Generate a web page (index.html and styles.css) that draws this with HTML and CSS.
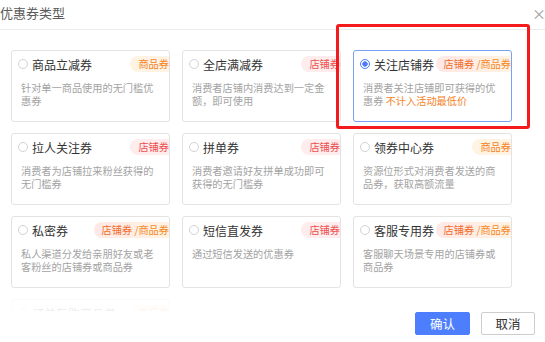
FILE: index.html
```html
<!DOCTYPE html>
<html lang="zh-CN">
<head>
    <meta charset="UTF-8">
    <meta name="viewport" content="width=device-width, initial-scale=1.0">
    <title>优惠券类型</title>
    <link rel="stylesheet" href="styles.css">
</head>
<body>
    <div class="dialog">
        <div class="dialog-header">
            <span class="dialog-title">优惠券类型</span>
            <span class="dialog-close">×</span>
        </div>
        <div class="body-wrap">
            <div class="dialog-body">
                <div class="coupon-grid">
                    <div class="coupon-card">
                        <div class="coupon-head">
                            <span class="radio"></span>
                            <span class="coupon-name">商品立减券</span>
                            <span class="tag tag-goods">商品券</span>
                        </div>
                        <div class="coupon-desc">针对单一商品使用的无门槛优惠券</div>
                    </div>
                    <div class="coupon-card">
                        <div class="coupon-head">
                            <span class="radio"></span>
                            <span class="coupon-name">全店满减券</span>
                            <span class="tag tag-shop">店铺券</span>
                        </div>
                        <div class="coupon-desc">消费者店铺内消费达到一定金额，即可使用</div>
                    </div>
                    <div class="coupon-card selected">
                        <div class="coupon-head">
                            <span class="radio"></span>
                            <span class="coupon-name">关注店铺券</span>
                            <span class="tag tag-both"><span class="part-shop">店铺券</span> /商品券</span>
                        </div>
                        <div class="coupon-desc">消费者关注店铺即可获得的优惠券 <span class="note">不计入活动最低价</span></div>
                    </div>

                    <div class="coupon-card">
                        <div class="coupon-head">
                            <span class="radio"></span>
                            <span class="coupon-name">拉人关注券</span>
                            <span class="tag tag-shop">店铺券</span>
                        </div>
                        <div class="coupon-desc">消费者为店铺拉来粉丝获得的无门槛券</div>
                    </div>
                    <div class="coupon-card">
                        <div class="coupon-head">
                            <span class="radio"></span>
                            <span class="coupon-name">拼单券</span>
                            <span class="tag tag-shop">店铺券</span>
                        </div>
                        <div class="coupon-desc">消费者邀请好友拼单成功即可获得的无门槛券</div>
                    </div>
                    <div class="coupon-card">
                        <div class="coupon-head">
                            <span class="radio"></span>
                            <span class="coupon-name">领券中心券</span>
                            <span class="tag tag-goods">商品券</span>
                        </div>
                        <div class="coupon-desc">资源位形式对消费者发送的商品券，获取高额流量</div>
                    </div>

                    <div class="coupon-card">
                        <div class="coupon-head">
                            <span class="radio"></span>
                            <span class="coupon-name">私密券</span>
                            <span class="tag tag-both"><span class="part-shop">店铺券</span> /商品券</span>
                        </div>
                        <div class="coupon-desc">私人渠道分发给亲朋好友或老客粉丝的店铺券或商品券</div>
                    </div>
                    <div class="coupon-card">
                        <div class="coupon-head">
                            <span class="radio"></span>
                            <span class="coupon-name">短信直发券</span>
                            <span class="tag tag-shop">店铺券</span>
                        </div>
                        <div class="coupon-desc">通过短信发送的优惠券</div>
                    </div>
                    <div class="coupon-card">
                        <div class="coupon-head">
                            <span class="radio"></span>
                            <span class="coupon-name">客服专用券</span>
                            <span class="tag tag-both"><span class="part-shop">店铺券</span> /商品券</span>
                        </div>
                        <div class="coupon-desc">客服聊天场景专用的店铺券或商品券</div>
                    </div>

                    <div class="coupon-card">
                        <div class="coupon-head">
                            <span class="radio"></span>
                            <span class="coupon-name">订单复购商品券</span>
                            <span class="tag tag-goods">商品券</span>
                        </div>
                        <div class="coupon-desc">下单后复购可使用的商品券</div>
                    </div>
                </div>
            </div>
        </div>
        <div class="dialog-footer">
            <button class="btn btn-primary">确认</button>
            <button class="btn">取消</button>
        </div>
        <div class="mark-box"></div>
    </div>
</body>
</html>
```

FILE: styles.css
```css
body {
    margin: 0;
    font-family: "Noto Sans CJK SC", "Noto Sans", sans-serif;
    background-color: #fff;
    color: #333;
}
.dialog {
    position: relative;
    width: 545px;
    height: 342px;
    overflow: hidden;
}
.dialog-header {
    display: flex;
    justify-content: space-between;
    height: 29px;
    border-bottom: 1px solid #ececec;
}
.dialog-title {
    font-size: 13px;
    line-height: 26px;
    color: #5a5a5a;
}
.dialog-close {
    font-size: 14px;
    line-height: 26px;
    color: #a0a0a0;
    margin-right: -1px;
}
.body-wrap {
    position: relative;
}
.body-wrap::after {
    content: "";
    position: absolute;
    left: 0;
    right: 7px;
    bottom: 0;
    height: 24px;
    background: linear-gradient(rgba(255, 255, 255, 0), rgba(255, 255, 255, 0.8) 50%, rgba(255, 255, 255, 0.92));
}
.dialog-body {
    height: 281px;
    overflow-y: scroll;
    box-sizing: border-box;
    padding: 20px 0 0 11px;
}
.dialog-body::-webkit-scrollbar {
    width: 7px;
}
.dialog-body::-webkit-scrollbar-track {
    background: #f4f4f4;
}
.dialog-body::-webkit-scrollbar-thumb {
    background: #e2e2e2;
}
.coupon-grid {
    display: grid;
    grid-template-columns: repeat(3, 159px);
    grid-auto-rows: 72px;
    column-gap: 12px;
    row-gap: 11px;
    padding-bottom: 40px;
}
.coupon-card {
    box-sizing: border-box;
    border: 1px solid #e3e3e3;
    border-radius: 3px;
    padding: 5px 0 0 6px;
    overflow: hidden;
    background: #fff;
}
.coupon-card.selected {
    border-color: #7ba0f5;
}
.coupon-head {
    display: flex;
    align-items: center;
    height: 16px;
}
.radio {
    flex: none;
    width: 10px;
    height: 10px;
    box-sizing: border-box;
    border: 1px solid #d2d2d2;
    border-radius: 50%;
}
.selected .radio {
    border-color: #4d7cfe;
    background: radial-gradient(circle, #4d7cfe 2.4px, #fff 3px);
}
.coupon-name {
    margin-left: 4px;
    font-size: 12px;
    color: #333;
    white-space: nowrap;
}
.tag {
    margin-left: auto;
    flex: none;
    height: 16px;
    line-height: 16px;
    padding-left: 8px;
    font-size: 10.2px;
    border-radius: 8px 0 0 8px;
    white-space: nowrap;
}
.tag-goods {
    background: #fff3e3;
    color: #f5821f;
}
.tag-shop {
    background: #ffecec;
    color: #ee4e4e;
}
.tag-both {
    background: linear-gradient(90deg, #ffe8e6, #fff3e2);
    color: #f5871f;
}
.tag-both .part-shop {
    color: #f26a2a;
}
.coupon-desc {
    margin-top: 9px;
    padding: 0 8px 0 3px;
    font-size: 10.2px;
    line-height: 13.3px;
    color: #a3a3a3;
}
.coupon-desc .note {
    color: #f5821f;
}
.dialog-footer {
    display: flex;
    justify-content: flex-end;
    gap: 11px;
    padding: 1px 10px 0 0;
}
.btn {
    width: 54px;
    height: 23px;
    padding: 0;
    border: 1px solid #cdcdcd;
    border-radius: 2px;
    background: #fff;
    color: #333;
    font-family: "Noto Sans CJK SC", sans-serif;
    font-size: 12.5px;
}
.btn-primary {
    width: 55px;
    border-color: #4d7efe;
    background: #4d7efe;
    color: #fff;
}
.mark-box {
    position: absolute;
    left: 336px;
    top: 24px;
    width: 194px;
    height: 105px;
    box-sizing: border-box;
    border: 3px solid #f31b1b;
    border-radius: 3px;
}
```
